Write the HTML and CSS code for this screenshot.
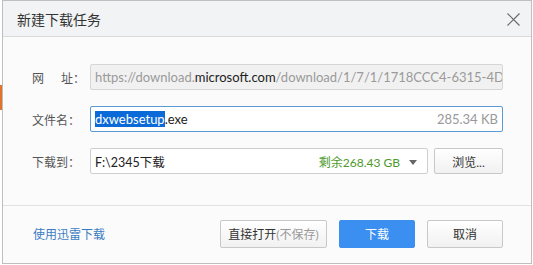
FILE: index.html
```html
<!DOCTYPE html>
<html lang="zh-CN">
<head>
    <meta charset="UTF-8">
    <title>新建下载任务</title>
    <link rel="stylesheet" href="styles.css">
</head>
<body>
    <div class="dialog">
        <div class="header">
            <span class="title">新建下载任务</span>
            <span class="close">
                <svg width="13" height="13" viewBox="0 0 13 13"><path d="M0.5 0.5L12.5 12.5M12.5 0.5L0.5 12.5" stroke="#6b6b6b" stroke-width="1.2" fill="none"/></svg>
            </span>
        </div>

        <div class="form">
            <div class="row">
                <label class="label">网<span class="sp"></span>址：</label>
                <div class="field readonly">
                    <span class="url"><span class="dim">https://download.</span>microsoft.com<span class="dim">/download/1/7/1/1718CCC4-6315-4D</span></span>
                </div>
            </div>
            <div class="row">
                <label class="label">文件名：</label>
                <div class="field active">
                    <span class="name"><span class="sel">dxwebsetup</span>.exe</span>
                    <span class="size">285.34 KB</span>
                </div>
            </div>
            <div class="row">
                <label class="label">下载到：</label>
                <div class="field select">
                    <span class="path">F:\2345下载</span>
                    <span class="free">剩余268.43 GB</span>
                    <span class="arrow"></span>
                </div>
                <button class="btn browse">浏览...</button>
            </div>
        </div>

        <div class="footer">
            <a href="#" class="link">使用迅雷下载</a>
            <div class="actions">
                <button class="btn open">直接打开<span class="dim">(不保存)</span></button>
                <button class="btn primary">下载</button>
                <button class="btn cancel">取消</button>
            </div>
        </div>
    </div>
</body>
</html>
```

FILE: styles.css
```css
body {
    margin: 0;
    padding: 0;
    font-family: Lato, "Noto Sans CJK SC", sans-serif;
    font-size: 13px;
    color: #333;
    background: #fff linear-gradient(to bottom, transparent 85px, #e0742c 85px, #e0742c 110px, transparent 110px) no-repeat left top / 2px 100%;
}
.dialog {
    margin: 0 1px 0 2px;
    height: 264px;
    box-sizing: border-box;
    border: 1px solid #bfbfbf;
    background: #fbfbfb;
    display: flex;
    flex-direction: column;
}
.header {
    height: 35px;
    flex: none;
    background: #f2f3f5;
    border-bottom: 1px solid #dadada;
    display: flex;
    align-items: center;
    justify-content: space-between;
    padding: 0 11px 0 14px;
}
.title {
    font-size: 14px;
    color: #333;
}
.close {
    display: flex;
    margin-top: 2px;
}
.form {
    padding: 27px 28px 0 29px;
    display: flex;
    flex-direction: column;
    gap: 16px;
    height: 141px;
    flex: none;
    border-bottom: 1px solid #e1e1e1;
}
.row {
    display: flex;
    align-items: center;
    height: 26px;
}
.label {
    width: 58px;
    flex: none;
    font-size: 12px;
    color: #555;
    display: flex;
}
.sp {
    width: 17px;
}
.field {
    flex: 1;
    min-width: 0;
    height: 26px;
    box-sizing: border-box;
    border: 1px solid #cfcfcf;
    border-radius: 2px;
    background: #fff;
    display: flex;
    align-items: center;
    padding: 0 4px;
    overflow: hidden;
    white-space: nowrap;
}
.readonly {
    background: #f1f1f1;
    border-color: #d6d6d6;
    color: #222;
}
.dim {
    color: #9a9a9a;
}
.active {
    border-color: #5b9bd5;
    justify-content: space-between;
}
.sel {
    background: #0a6ad8;
    color: #fff;
}
.name {
    color: #222;
}
.size {
    color: #999;
}
.select {
    margin-right: 6px;
    color: #222;
    font-size: 12.5px;
}
.path {
    flex: 1;
}
.free {
    color: #4c9a2a;
    font-size: 12px;
}
.arrow {
    width: 0;
    height: 0;
    border-left: 4px solid transparent;
    border-right: 4px solid transparent;
    border-top: 5px solid #666;
    margin: 2px 6px 0 9px;
}
.btn {
    font-family: inherit;
    font-size: 12px;
    color: #333;
    border: 1px solid #c8c8c8;
    border-radius: 2px;
    background: linear-gradient(#ffffff, #f1f1f1);
    padding: 0;
    cursor: pointer;
}
.browse {
    width: 69px;
    height: 26px;
    flex: none;
}
.footer {
    flex: 1;
    display: flex;
    align-items: center;
    justify-content: space-between;
    padding: 0 28px 2px 30px;
}
.link {
    font-size: 12px;
    color: #3a7cc3;
    text-decoration: none;
}
.actions {
    display: flex;
    gap: 12px;
}
.actions .btn {
    height: 28px;
}
.open {
    width: 107px;
}
.primary {
    width: 76px;
    background: #3b8ff0;
    border-color: #3b8ff0;
    color: #fff;
}
.cancel {
    width: 76px;
}
```
